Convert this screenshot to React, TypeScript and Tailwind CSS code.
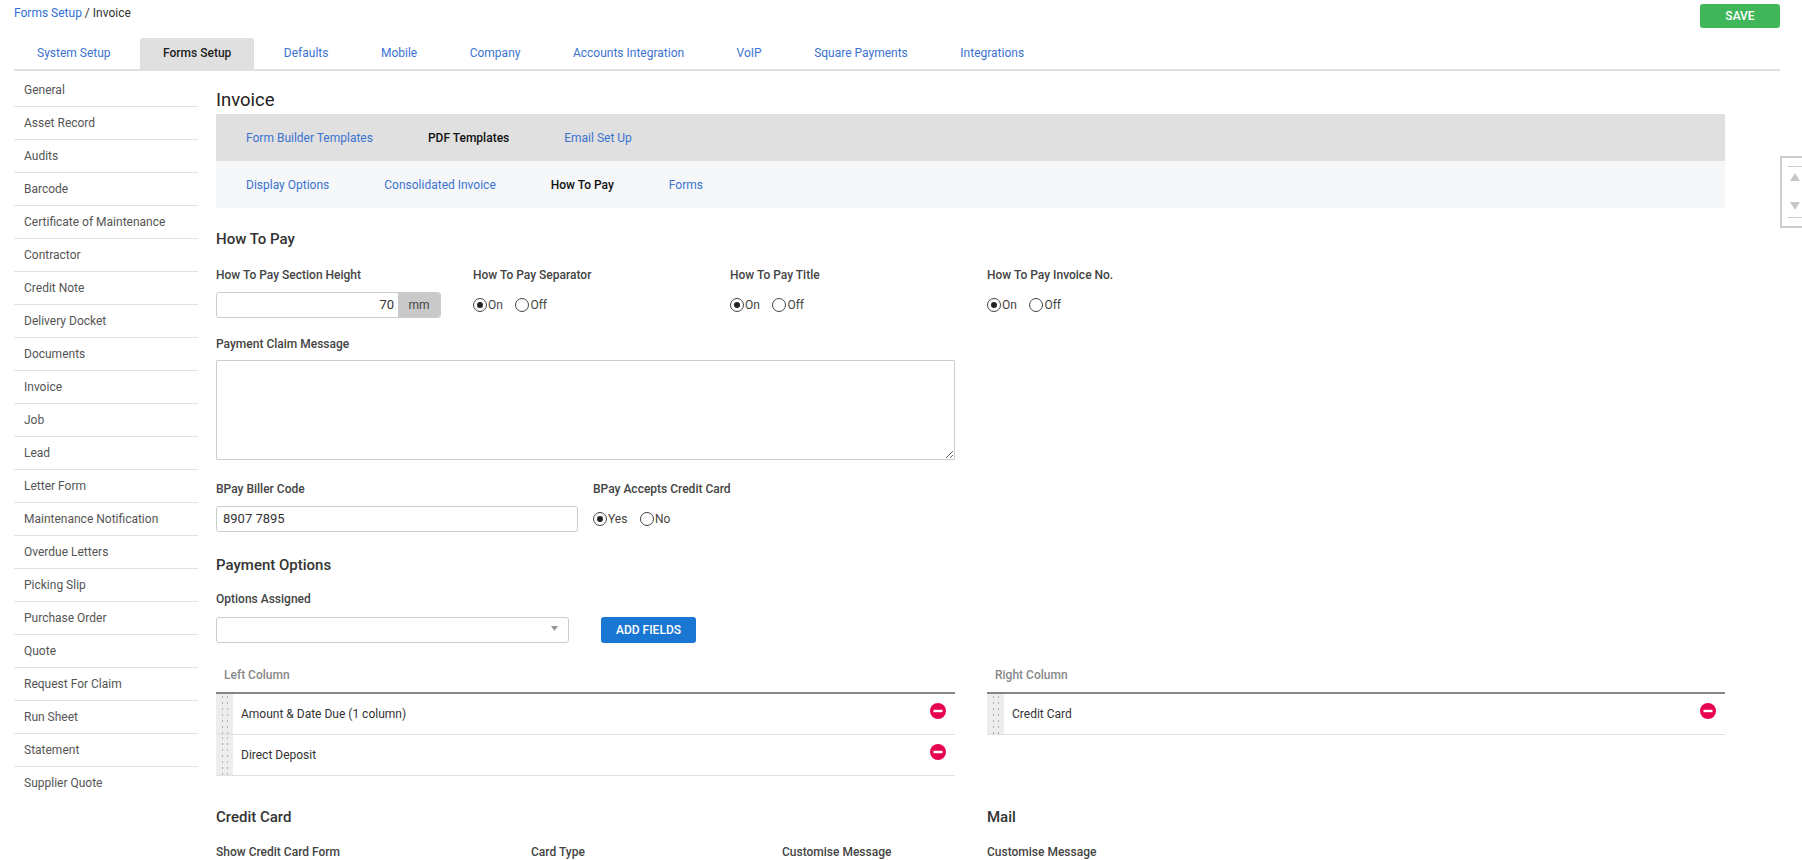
import { Fragment } from "react";

const topTabs = ["System Setup", "Forms Setup", "Defaults", "Mobile", "Company", "Accounts Integration", "VoIP", "Square Payments", "Integrations"];

const sideItems = [
  "General", "Asset Record", "Audits", "Barcode", "Certificate of Maintenance", "Contractor", "Credit Note",
  "Delivery Docket", "Documents", "Invoice", "Job", "Lead", "Letter Form", "Maintenance Notification",
  "Overdue Letters", "Picking Slip", "Purchase Order", "Quote", "Request For Claim", "Run Sheet", "Statement", "Supplier Quote",
];

function Radio({ label, checked }: { label: string; checked?: boolean }) {
  return (
    <span className="flex items-center gap-px text-[12px] text-[#444]">
      <span className="flex h-[14px] w-[14px] items-center justify-center rounded-full border border-[#444] bg-white">
        {checked && <span className="h-[6px] w-[6px] rounded-full bg-[#222]" />}
      </span>
      {label}
    </span>
  );
}

function RadioGroup({ a, b, checked = true }: { a: string; b: string; checked?: boolean }) {
  return (
    <div className="mt-[1px] flex h-[26px] items-center gap-[12.5px]">
      <Radio label={a} checked={checked} />
      <Radio label={b} />
    </div>
  );
}

function Label({ children }: { children: React.ReactNode }) {
  return <div className="mb-[9px] h-4 text-[12px] leading-4 font-medium text-[#444]">{children}</div>;
}

function MinusIcon() {
  return (
    <svg viewBox="0 0 16 16" className="h-4 w-4">
      <circle cx="8" cy="8" r="8" fill="#e6064f" />
      <rect x="3.5" y="6.8" width="9" height="2.4" fill="#fff" />
    </svg>
  );
}

function ColumnList({ title, rows }: { title: string; rows: string[] }) {
  return (
    <div className="w-full">
      <div className="h-[34px] pt-[9px] pl-2 text-[12px] leading-4 font-medium text-[#888]">{title}</div>
      <div className="border-t-2 border-[#84878a]">
        {rows.map((row) => (
          <div key={row} className="flex h-[41px] items-stretch border-b border-[#e0e0e0]">
            <div className="flex w-[17px] shrink-0 justify-center bg-[#ededed]">
              <div className="w-[10px] bg-[radial-gradient(#b4b4b4_0.8px,transparent_1.1px)] bg-[length:5px_6px]" />
            </div>
            <div className="flex flex-1 items-center pl-2 text-[12px] text-[#333]">{row}</div>
            <div className="pt-[9px] pr-[9px]">
              <MinusIcon />
            </div>
          </div>
        ))}
      </div>
    </div>
  );
}

export default function App() {
  return (
    <div className="relative h-[860px] w-full overflow-hidden bg-white font-['Roboto',sans-serif] text-[12px]">
      <div className="flex h-[38px] items-start justify-between pr-[22px] pl-[14px]">
        <div className="pt-[5px] text-[12px] leading-4 text-[#333]">
          <span className="text-[#2f6fd6]">Forms Setup</span> / Invoice
        </div>
        <button className="mt-1 h-6 w-20 rounded-[3px] bg-[#3fb65a] text-[12px] font-medium text-white">SAVE</button>
      </div>

      <div className="mr-[22px] ml-[14px] flex h-[33px] border-b-2 border-[#e0e0e0]">
        {topTabs.map((tab) => (
          <div
            key={tab}
            className={
              tab === "Forms Setup"
                ? "mr-[6.5px] flex items-center rounded-t-[3px] bg-[#e0e0e0] px-[23px] pb-[1px] text-[12px] font-medium text-[#222]"
                : "mr-[6.5px] flex items-center px-[23px] pb-[1px] text-[12px] text-[#3b73d0]"
            }
          >
            {tab}
          </div>
        ))}
      </div>

      <div className="flex">
        <div className="ml-[14px] w-[184px] shrink-0 pt-[3px]">
          {sideItems.map((item) => (
            <div key={item} className="flex h-[33px] items-center border-b border-[#dee2e6] pb-[1px] pl-[10px] text-[12px] text-[#555] last:border-transparent">
              {item}
            </div>
          ))}
        </div>

        <div className="ml-[18px] w-[1509px] shrink-0">
          <h1 className="flex h-[43px] items-end pb-[1px] text-[18.5px] leading-[26px] font-normal text-[#222]">Invoice</h1>

          <div className="flex h-[47px] items-center gap-[55px] bg-[#e0e0e0] pl-[30px]">
            <span className="text-[#3b73d0]">Form Builder Templates</span>
            <span className="font-medium text-[#111]">PDF Templates</span>
            <span className="text-[#3b73d0]">Email Set Up</span>
          </div>
          <div className="flex h-[47px] items-center gap-[55px] bg-[#f6f7f9] pl-[30px]">
            <span className="text-[#3b73d0]">Display Options</span>
            <span className="text-[#3b73d0]">Consolidated Invoice</span>
            <span className="font-medium text-[#111]">How To Pay</span>
            <span className="text-[#3b73d0]">Forms</span>
          </div>

          <h2 className="mt-[21px] h-5 text-[15px] leading-5 font-medium text-[#333]">How To Pay</h2>

          <div className="mt-[18px] grid grid-cols-[257px_257px_257px_257px]">
            <div>
              <Label>How To Pay Section Height</Label>
              <div className="flex h-[26px] w-[225px] overflow-hidden rounded-[3px] border border-[#ccc]">
                <div className="flex flex-1 items-center justify-end pr-[4px] text-[13px] text-[#333]">70</div>
                <div className="flex w-[42px] items-center justify-center bg-[#c9c9c9] text-[12px] text-[#444]">mm</div>
              </div>
            </div>
            <div>
              <Label>How To Pay Separator</Label>
              <RadioGroup a="On" b="Off" />
            </div>
            <div>
              <Label>How To Pay Title</Label>
              <RadioGroup a="On" b="Off" />
            </div>
            <div>
              <Label>How To Pay Invoice No.</Label>
              <RadioGroup a="On" b="Off" />
            </div>
          </div>

          <div className="mt-[18px]">
            <div className="mb-[8px] h-4 text-[12px] leading-4 font-medium text-[#444]">Payment Claim Message</div>
            <textarea className="block h-[100px] w-[739px] rounded-[1px] border border-[#ccc] resize-y" readOnly />
          </div>

          <div className="mt-[21px] flex">
            <div className="w-[377px]">
              <Label>BPay Biller Code</Label>
              <div className="flex h-[26px] w-[362px] items-center rounded-[3px] border border-[#ccc] pl-[6px] text-[13px] text-[#333]">8907 7895</div>
            </div>
            <div>
              <Label>BPay Accepts Credit Card</Label>
              <RadioGroup a="Yes" b="No" />
            </div>
          </div>

          <h2 className="mt-[23px] h-5 text-[15px] leading-5 font-medium text-[#333]">Payment Options</h2>

          <div className="mt-[16px]">
            <div className="mb-[10px] h-4 text-[12px] leading-4 font-medium text-[#444]">Options Assigned</div>
            <div className="flex items-center">
              <div className="relative h-[26px] w-[353px] rounded-[3px] border border-[#ccc]">
                <svg viewBox="0 0 7 5" className="absolute top-[8px] right-[10px] h-[5px] w-[7px]">
                  <path d="M0 0h7L3.5 5z" fill="#999" />
                </svg>
              </div>
              <button className="ml-8 h-[26px] w-[95px] rounded-[3px] bg-[#1976d2] text-[12px] font-medium text-white">ADD FIELDS</button>
            </div>
          </div>

          <div className="mt-[15px] grid grid-cols-[739px_738px] gap-x-8">
            <ColumnList title="Left Column" rows={["Amount & Date Due (1 column)", "Direct Deposit"]} />
            <ColumnList title="Right Column" rows={["Credit Card"]} />
          </div>

          <div className="mt-[31px] grid grid-cols-[315px_251px_205px_300px]">
            {[
              ["Credit Card", "Show Credit Card Form"],
              ["", "Card Type"],
              ["", "Customise Message"],
              ["Mail", "Customise Message"],
            ].map(([head, label]) => (
              <Fragment key={label + head}>
                <div>
                  <div className="h-5 text-[15px] leading-5 font-medium text-[#333]">{head}</div>
                  <div className="mt-[17px] h-4 text-[12px] leading-4 font-medium text-[#444]">{label}</div>
                </div>
              </Fragment>
            ))}
          </div>
        </div>
      </div>

      <div className="absolute top-[156px] right-0 flex h-[72px] w-[22px] flex-col border-y-2 border-l-2 border-[#ccc] pt-2 pl-[6px]">
        <div className="h-[1px] w-full bg-[#ccc]" />
        <svg viewBox="0 0 10 8" className="mt-[6px] ml-[2px] h-2 w-[10px]">
          <path d="M5 0l5 8H0z" fill="#c8c8c8" />
        </svg>
        <svg viewBox="0 0 10 8" className="mt-[21px] ml-[2px] h-2 w-[10px]">
          <path d="M0 0h10L5 8z" fill="#c8c8c8" />
        </svg>
        <div className="mt-[7px] h-[1px] w-full bg-[#ccc]" />
      </div>
    </div>
  );
}
